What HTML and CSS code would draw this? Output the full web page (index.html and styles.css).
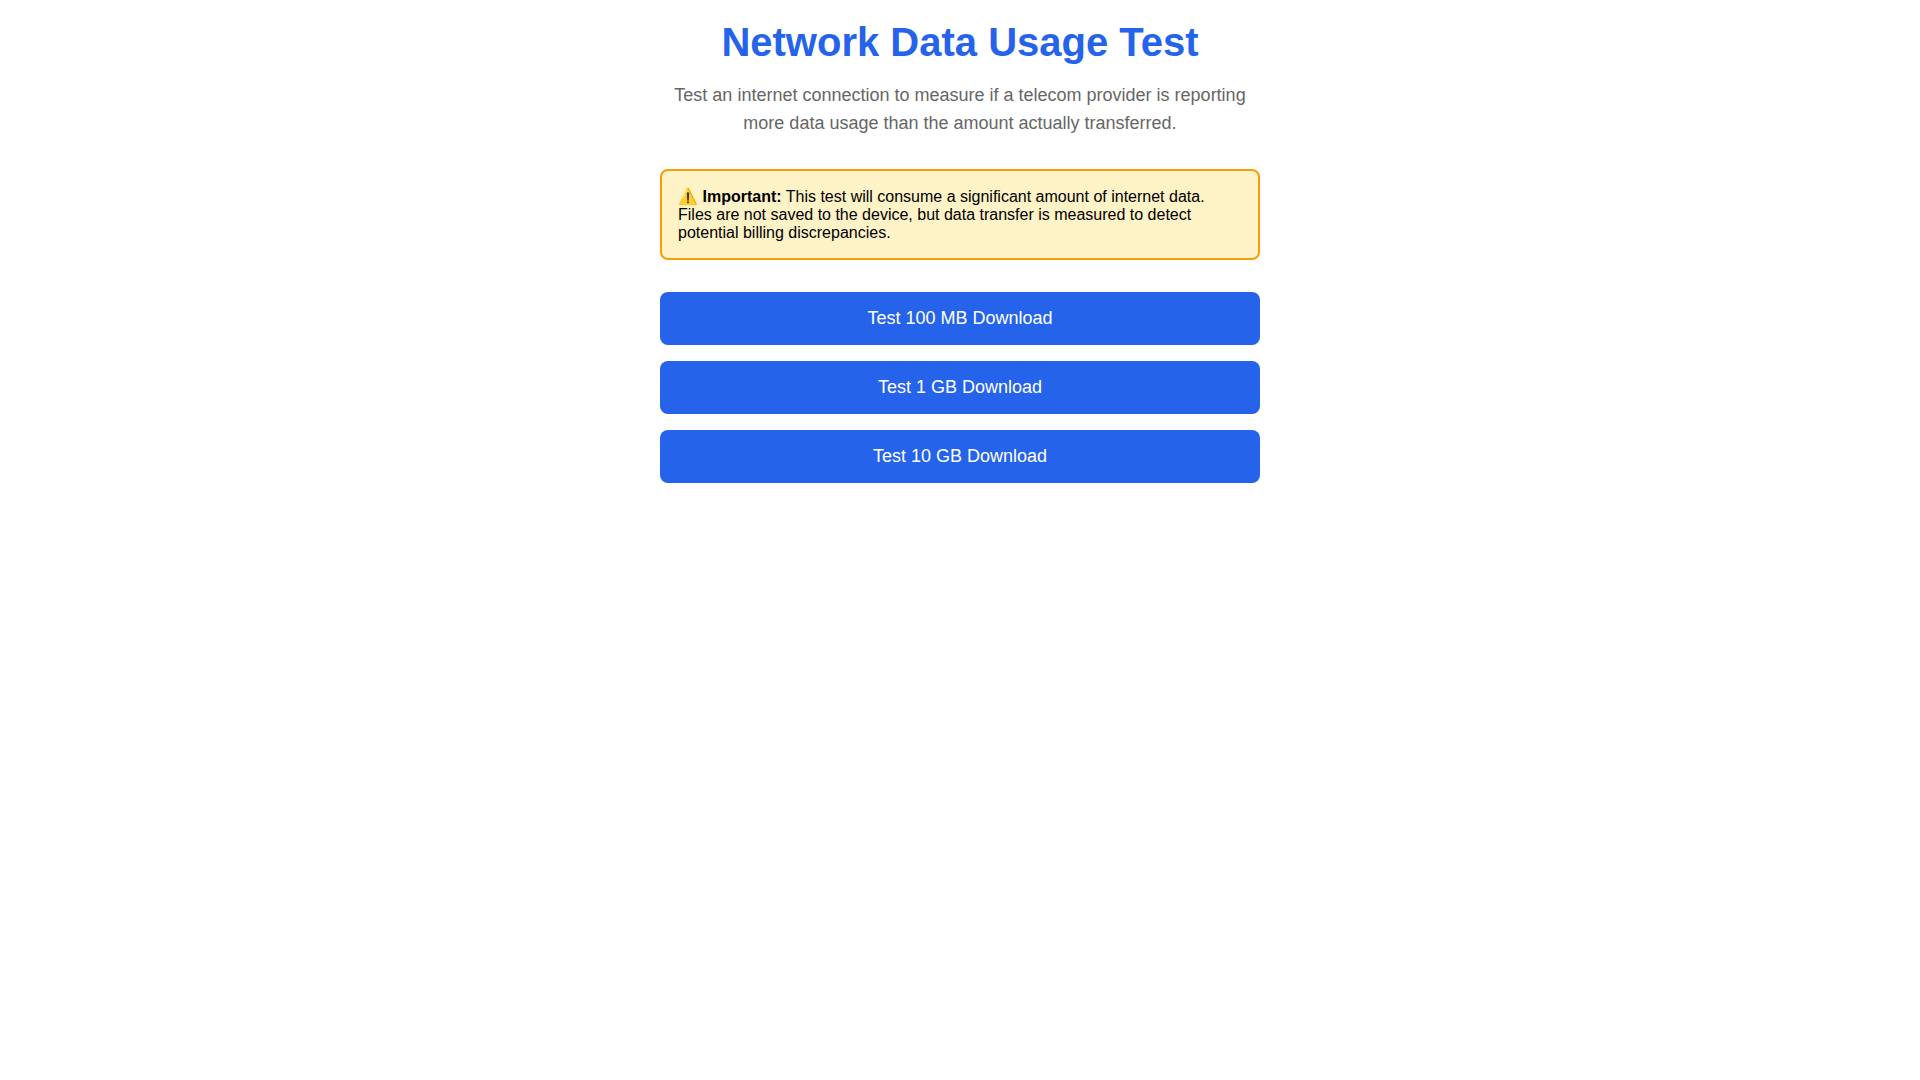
FILE: index.html
```html
<!DOCTYPE html>
<html lang="en">
<head>
<meta charset="utf-8">
<meta name="viewport" content="width=device-width, initial-scale=1">
<title>Network Data Usage Test</title>
<link rel="stylesheet" href="styles.css">
</head>
<body>
<main class="container">
  <header class="header">
    <h1 class="title">Network Data Usage Test</h1>
    <p class="subtitle">Test an internet connection to measure if a telecom provider is reporting more data usage than the amount actually transferred.</p>
  </header>
  <div class="warning">⚠️ <strong>Important:</strong> This test will consume a significant amount of internet data. Files are not saved to the device, but data transfer is measured to detect potential billing discrepancies.</div>
  <div class="buttons">
    <button class="test-button" type="button">Test 100 MB Download</button>
    <button class="test-button" type="button">Test 1 GB Download</button>
    <button class="test-button" type="button">Test 10 GB Download</button>
  </div>
</main>
</body>
</html>
```
FILE: styles.css
```css
* {
  box-sizing: border-box;
}

body {
  margin: 0;
  padding: 20px;
  background: #fff;
  color: #000;
  font-family: "Liberation Sans", Arial, sans-serif;
  font-size: 16px;
}

.container {
  max-width: 600px;
  margin: 0 auto;
}

.header {
  margin-bottom: 32px;
  text-align: center;
}

.title {
  margin: 0 0 16px;
  color: #2563eb;
  font-size: 40px;
  font-weight: bold;
}

.subtitle {
  margin: 0;
  color: #666;
  font-size: 18px;
  line-height: 28px;
}

.warning {
  margin-bottom: 32px;
  padding: 16px;
  border: 2px solid #f59e0b;
  border-radius: 8px;
  background: #fef3c7;
}

.buttons {
  display: flex;
  flex-direction: column;
  gap: 16px;
}

.test-button {
  padding: 16px;
  border: none;
  border-radius: 8px;
  background: #2563eb;
  color: #fff;
  font-family: inherit;
  font-size: 18px;
  cursor: pointer;
}
```
